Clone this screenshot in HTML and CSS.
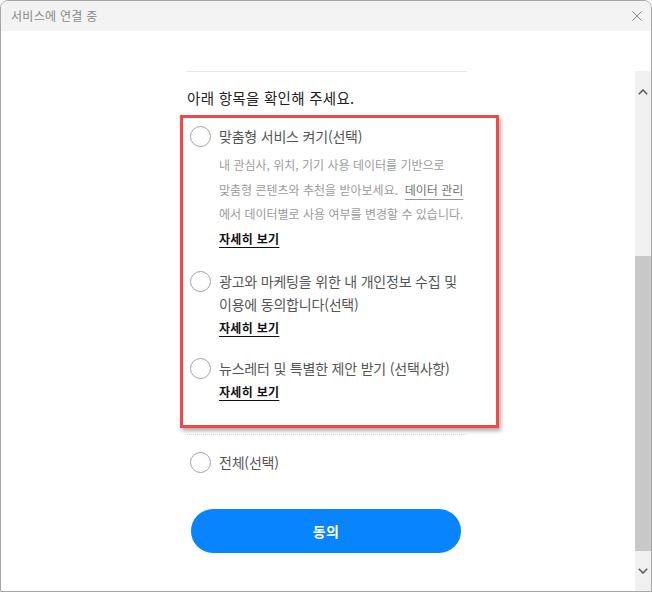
FILE: index.html
```html
<!DOCTYPE html>
<html lang="ko">
<head>
<meta charset="utf-8">
<title>서비스에 연결 중</title>
<link rel="stylesheet" href="styles.css">
</head>
<body>
<div class="window">
  <div class="titlebar">
    <span class="title">서비스에 연결 중</span>
    <svg class="close" width="10" height="10" viewBox="0 0 10 10"><path d="M0.5 0.5L9.5 9.5M9.5 0.5L0.5 9.5" stroke="#8a8a8a" stroke-width="1" fill="none"/></svg>
  </div>
  <div class="body">
    <div class="main">
      <div class="rule"></div>
      <div class="heading">아래 항목을 확인해 주세요.</div>
      <div class="box">
        <div class="item">
          <span class="radio"></span>
          <div class="text">
            <div class="label">맞춤형 서비스 켜기(선택)</div>
            <div class="desc">내 관심사, 위치, 기기 사용 데이터를 기반으로<br>맞춤형 콘텐츠와 추천을 받아보세요.&nbsp; <span class="link">데이터 관리</span><br>에서 데이터별로 사용 여부를 변경할 수 있습니다.</div>
            <div class="detail"><span>자세히 보기</span></div>
          </div>
        </div>
        <div class="item item-second">
          <span class="radio"></span>
          <div class="text">
            <div class="label">광고와 마케팅을 위한 내 개인정보 수집 및<br>이용에 동의합니다(선택)</div>
            <div class="detail"><span>자세히 보기</span></div>
          </div>
        </div>
        <div class="item item-third">
          <span class="radio"></span>
          <div class="text">
            <div class="label">뉴스레터 및 특별한 제안 받기 (선택사항)</div>
            <div class="detail"><span>자세히 보기</span></div>
          </div>
        </div>
      </div>
      <div class="dots"></div>
      <div class="item all">
        <span class="radio"></span>
        <div class="text">
          <div class="label">전체(선택)</div>
        </div>
      </div>
      <button class="agree">동의</button>
    </div>
    <div class="scrollbar">
      <div class="sb-btn sb-up"><svg width="10" height="6" viewBox="0 0 10 6"><path d="M0.8 5.2L5 1L9.2 5.2" stroke="#5f5f5f" stroke-width="1.6" fill="none"/></svg></div>
      <div class="sb-track"></div>
      <div class="sb-thumb"></div>
      <div class="sb-btn sb-down"><svg width="10" height="6" viewBox="0 0 10 6"><path d="M0.8 0.8L5 5L9.2 0.8" stroke="#5f5f5f" stroke-width="1.6" fill="none"/></svg></div>
    </div>
  </div>
</div>
</body>
</html>
```

FILE: styles.css
```css
* { box-sizing: border-box; }
html, body { margin: 0; padding: 0; background: #ffffff; }
body { font-family: "Noto Sans CJK KR", "Noto Sans", sans-serif; }

.window {
  width: 652px;
  height: 592px;
  border: 1px solid #a6a6a6;
  border-radius: 8px 8px 0 0;
  overflow: hidden;
  display: flex;
  flex-direction: column;
  background: #ffffff;
}

.titlebar {
  height: 30px;
  flex: none;
  background: #f3f3f3;
  display: flex;
  align-items: center;
  justify-content: space-between;
  padding: 0 9px 0 10px;
}
.title { font-size: 12px; color: #8a8a8a; line-height: 16px; letter-spacing: 0.3px; }
.close { display: block; }

.body { flex: 1; display: flex; min-height: 0; }

.main {
  flex: 1;
  padding: 40px 0 0 186px;
  overflow: hidden;
}

.rule { width: 280px; height: 1px; background: #e6e6e6; }

.heading {
  margin-top: 14px;
  font-size: 14.5px;
  line-height: 24px;
  letter-spacing: 0.3px;
  color: #222222;
}

.box {
  margin-top: 5px;
  margin-left: -7px;
  width: 319px;
  border: 3px solid #f44848;
  background: #ffffff;
  box-shadow: 2px 3px 4px rgba(0, 0, 0, 0.32);
  padding: 7px 7px 23px 7px;
}

.item { display: flex; align-items: flex-start; gap: 8px; }
.item-second { margin-top: 21px; }
.item-third { margin-top: 19px; }

.radio {
  flex: none;
  width: 21px;
  height: 21px;
  margin-top: 1px;
  border: 1.5px solid #a2a2a2;
  border-radius: 50%;
  background: #ffffff;
}

.label {
  font-size: 14px;
  line-height: 23px;
  letter-spacing: -0.2px;
  color: #555555;
}

.desc {
  margin-top: 5px;
  font-size: 12px;
  line-height: 24.5px;
  letter-spacing: 0;
  color: #9b9b9b;
}
.link {
  color: #707070;
  text-decoration: underline;
  text-decoration-color: #9a9a9a;
  text-underline-offset: 4px;
}

.detail {
  margin-top: 2px;
  font-size: 12px;
  line-height: 20px;
  letter-spacing: 0.3px;
  font-weight: 700;
  color: #111111;
}
.detail span {
  text-decoration: underline;
  text-underline-offset: 3px;
  text-decoration-thickness: 1px;
}

.dots {
  margin-top: 6px;
  width: 279px;
  border-top: 1px dotted #d4d4d4;
}

.all { margin-top: 16px; padding-left: 3px; }

.agree {
  display: block;
  margin: 35px 0 0 4px;
  width: 270px;
  height: 44px;
  border: none;
  border-radius: 22px;
  background: #0784fe;
  color: #ffffff;
  font-family: "Noto Sans CJK KR", "Noto Sans", sans-serif;
  font-size: 14px;
  font-weight: 700;
  letter-spacing: 0.3px;
  padding: 0;
}

.scrollbar {
  flex: none;
  width: 16px;
  margin-top: 40px;
  display: flex;
  flex-direction: column;
  background: #f0f0f0;
}
.sb-btn { display: flex; align-items: center; justify-content: center; flex: none; }
.sb-btn svg { display: block; }
.sb-up { height: 42px; }
.sb-track { height: 143px; flex: none; }
.sb-thumb { height: 295px; flex: none; background: #c8c8c8; }
.sb-down { flex: 1; padding-bottom: 0; }
```
